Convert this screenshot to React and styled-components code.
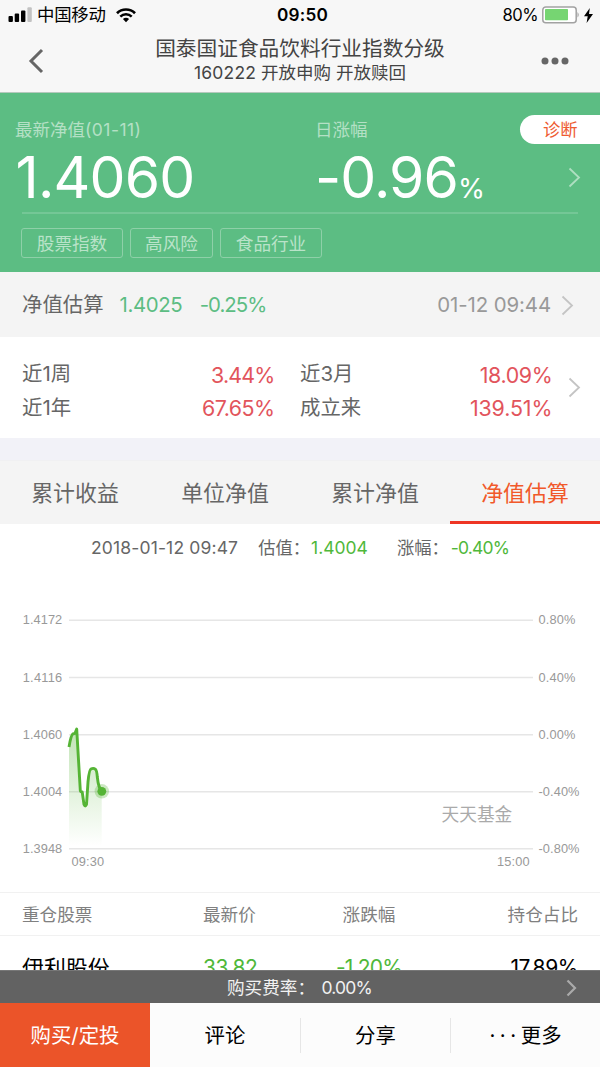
import React from "react";
import styled, { createGlobalStyle } from "styled-components";

const GlobalStyle = createGlobalStyle`
  * { box-sizing: border-box; }
  body { margin: 0; background: #fff; }
`;

const Screen = styled.div`
  width: 600px;
  height: 1067px;
  display: flex;
  flex-direction: column;
  overflow: hidden;
  background: #fff;
  color: #666;
  font-family: Inter, "Noto Sans CJK SC", sans-serif;
  font-weight: 400;
  white-space: nowrap;
`;

const Text = styled.span`
  display: block;
  font-size: ${(p) => p.$size}px;
  line-height: ${(p) => p.$line || 24}px;
  letter-spacing: ${(p) => p.$track || 0}px;
  color: ${(p) => p.$color || "inherit"};
  font-weight: ${(p) => p.$weight || 400};
`;

const Tracked = styled.span`
  letter-spacing: ${(p) => p.$track}px;
`;

const StatusBar = styled.div`
  height: 30px;
  flex: none;
  display: grid;
  grid-template-columns: 269px auto 1fr;
  align-items: center;
  padding: 0 7px 0 8px;
  background: #f7f7f7;
  color: #000;
`;

const StatusSide = styled.div`
  display: flex;
  align-items: center;
  gap: ${(p) => p.$gap}px;
  justify-content: ${(p) => (p.$end ? "flex-end" : "flex-start")};
`;

const NavBar = styled.header`
  height: 63px;
  flex: none;
  display: grid;
  grid-template-columns: 28px 1fr 28px;
  align-items: center;
  padding: 0 31px;
  background: #f7f7f7;
  border-bottom: 1px solid #b5c9bd;
`;

const BackIcon = styled.svg`
  display: block;
  margin-left: -3px;
`;

const NavTitle = styled.div`
  display: flex;
  flex-direction: column;
  align-items: center;
  color: #444;
`;

const Summary = styled.section`
  height: 179px;
  flex: none;
  background: #5cbd83;
  padding: 22px 0 0 15px;
  display: flex;
  flex-direction: column;
`;

const SummaryTop = styled.div`
  display: flex;
  height: 97px;
`;

const Metric = styled.div`
  width: ${(p) => p.$width}px;
  padding-top: 3px;
  color: #b4e0c5;
`;

const BigValue = styled.div`
  display: flex;
  align-items: baseline;
  height: 68px;
  padding: 2px 0 0 ${(p) => p.$indent || 0}px;
  color: #fff;
`;

const SummaryAside = styled.div`
  flex: 1;
  display: flex;
  flex-direction: column;
  align-items: flex-end;
`;

const Pill = styled.button`
  width: 80px;
  height: 29px;
  border: 0;
  padding: 0 0 0 23px;
  background: #fff;
  border-radius: 15px 0 0 15px;
  font-family: inherit;
  text-align: left;
`;

const AsideArrow = styled.div`
  padding: 23px 19px 0 0;
`;

const Divider = styled.div`
  height: 2px;
  flex: none;
  margin: 0 22px 0 7px;
  background: #74c796;
`;

const Tags = styled.div`
  display: flex;
  gap: 7px;
  padding: 14px 0 0 6px;
`;

const Tag = styled.div`
  height: 30px;
  width: ${(p) => p.$width}px;
  display: flex;
  align-items: center;
  justify-content: center;
  padding-top: 1px;
  border: 1px solid #8ed0a8;
  border-radius: 3px;
  color: #b9e3c9;
`;

const Estimate = styled.section`
  height: 65px;
  flex: none;
  display: flex;
  align-items: center;
  padding: 1px 26px 0 22px;
  background: #f4f4f4;
  color: #666;
`;

const Spacer = styled.div`
  flex: 1;
`;

const Gap = styled.div`
  width: ${(p) => p.$width}px;
`;

const Returns = styled.section`
  height: 101px;
  flex: none;
  display: flex;
  align-items: center;
  padding: 0 19px 0 22px;
`;

const ReturnGrid = styled.div`
  display: grid;
  grid-template-columns: 252px 252px;
  column-gap: 26px;
  width: 530px;
  padding-top: 16px;
`;

const ReturnCell = styled.div`
  height: 33.5px;
  display: flex;
  justify-content: space-between;
`;

const Figure = styled.div`
  padding-top: 0.5px;
  margin-right: -0.4px;
`;

const Band = styled.div`
  height: 23px;
  flex: none;
  background: #f2f2f8;
  border-bottom: 1px solid #f0f0f2;
`;

const Tabs = styled.nav`
  height: 63px;
  flex: none;
  display: grid;
  grid-template-columns: repeat(4, 1fr);
  background: #f4f4f4;
`;

const Tab = styled.div`
  display: flex;
  align-items: center;
  justify-content: center;
  padding-top: ${(p) => (p.$active ? 3 : 0)}px;
  color: ${(p) => (p.$active ? "#f1592a" : "#666")};
  border-bottom: ${(p) => (p.$active ? "3px solid #ee3524" : "0")};
`;

const Reading = styled.div`
  height: 48px;
  flex: none;
  display: flex;
  align-items: center;
  padding-left: 91px;
`;

const Chart = styled.svg`
  display: block;
  flex: none;
  width: 600px;
  height: 320px;
`;

const HoldingRow = styled.div`
  height: ${(p) => p.$height}px;
  flex: none;
  display: grid;
  grid-template-columns: 181px 107px 118px 1fr;
  align-items: center;
  padding: 2px 22px 0 22px;
  border-top: 1px solid #f1f1f1;
  color: #808080;

  > :nth-child(3) { text-align: center; }
  > :last-child { text-align: right; }
`;

const HoldingList = styled.section`
  flex: 1;
  min-height: 0;
  overflow: hidden;
`;

const FeeBar = styled.div`
  height: 33px;
  flex: none;
  display: flex;
  align-items: center;
  padding: 1px 23px 0 227px;
  background: #626262;
  color: #f1f1f1;
  border-top: 1px solid #777;
`;

const Actions = styled.footer`
  height: 64px;
  flex: none;
  display: grid;
  grid-template-columns: repeat(4, 1fr);
  align-items: center;
  background: #fcfcfc;
  color: #000;
`;

const Action = styled.div`
  height: ${(p) => (p.$primary ? 64 : 35)}px;
  display: flex;
  align-items: center;
  justify-content: center;
  padding-top: 2px;
  background: ${(p) => (p.$primary ? "#eb5429" : "transparent")};
  color: ${(p) => (p.$primary ? "#fff" : "#000")};
  border-left: ${(p) => (p.$line ? "1px solid #e6e6e6" : "0")};
`;

const Chevron = ({ color, w = 11, h = 19, stroke = 1.8 }) => (
  <svg width={w + 2} height={h + 2} viewBox={`-1 -1 ${w + 2} ${h + 2}`} fill="none" stroke={color} strokeWidth={stroke}>
    <path d={`M0.5 0.5 L${w - 1} ${h / 2} L0.5 ${h - 0.5}`} />
  </svg>
);

const Signal = () => (
  <svg width="24" height="16" viewBox="0 0 24 16">
    <rect x="0.5" y="9" width="4.4" height="6" rx="1" />
    <rect x="6.7" y="6.6" width="4.4" height="8.4" rx="1" />
    <rect x="13" y="3.4" width="4.4" height="11.6" rx="1" />
    <rect x="19.4" y="0.3" width="4.4" height="14.7" rx="1" fill="#c2c2c2" />
  </svg>
);

const Wifi = () => (
  <svg width="20" height="15" viewBox="0 0 20 15" fill="none" stroke="#000">
    <path d="M1 5.2 A12.8 12.8 0 0 1 19 5.2" strokeWidth="2.7" />
    <path d="M4.3 8.6 A8.2 8.2 0 0 1 15.7 8.6" strokeWidth="2.5" />
    <path d="M10 14.2 L6.9 11.1 A4.5 4.5 0 0 1 13.1 11.1 Z" fill="#000" stroke="none" />
  </svg>
);

const Battery = () => (
  <svg width="38" height="18" viewBox="0 0 38 18">
    <rect x="0.8" y="0.9" width="33.4" height="15.8" rx="3" fill="#fff" stroke="#a2a2a2" strokeWidth="1.5" />
    <rect x="3" y="3.1" width="23" height="11.2" rx="0.8" fill="#76d572" />
    <path d="M35.5 6 Q38 8.8 35.5 11.6 Z" fill="#a2a2a2" />
  </svg>
);

const Bolt = () => (
  <svg width="9" height="15" viewBox="0 0 9 15">
    <path d="M5.8 0 L0 8.2 H3.7 L2.6 15 L9 6 H5 Z" />
  </svg>
);

const levels = [
  { y: 620.3, value: "1.4172", change: "0.80%", w: 37 },
  { y: 677.5, value: "1.4116", change: "0.40%", w: 37 },
  { y: 734.7, value: "1.4060", change: "0.00%", w: 37 },
  { y: 791.7, value: "1.4004", change: "-0.40%", w: 41 },
  { y: 848.7, value: "1.3948", change: "-0.80%", w: 41 },
];

const curve =
  "M69 747 C70 741 71 735 73 733.8 L75 733.3 L76.7 729 L80.3 790.5 Q80.6 792 82.2 792 L84 804.5 Q85.2 807.5 86.5 804.5 L88 782 Q89.2 769.5 91 769 Q93.4 767.6 95.5 769.3 Q96.8 770.5 97.3 777 Q98.5 788 101.7 791.3";

const EstimateChart = () => (
  <Chart viewBox="0 572 600 320" fontFamily='"Liberation Sans", sans-serif' fontSize="12.8" fill="#999">
    <defs>
      <linearGradient id="fade" x1="0" y1="730" x2="0" y2="846" gradientUnits="userSpaceOnUse">
        <stop offset="0" stopColor="#55b435" stopOpacity="0.36" />
        <stop offset="1" stopColor="#55b435" stopOpacity="0" />
      </linearGradient>
    </defs>
    {levels.map((l) => (
      <g key={l.value}>
        <line x1="69" x2="533" y1={l.y} y2={l.y} stroke="#e6e6e6" strokeWidth="1.6" />
        <text x="62.2" y={l.y + 4} textAnchor="end" textLength="39.5">{l.value}</text>
        <text x="538.5" y={l.y + 4} textLength={l.w}>{l.change}</text>
      </g>
    ))}
    <path d={`${curve} V848 H69 Z`} fill="url(#fade)" />
    <path d={curve} fill="none" stroke="#55b435" strokeWidth="2.9" strokeLinejoin="round" />
    <circle cx="101.8" cy="791.3" r="7.2" fill="#55b435" fillOpacity="0.3" />
    <circle cx="101.8" cy="791.3" r="4.4" fill="#55b435" />
    <text x="71.5" y="866.2" textLength="32.5">09:30</text>
    <text x="497" y="866.2" textLength="32.5">15:00</text>
    <text x="441.5" y="820.8" fontFamily='"Noto Sans CJK SC", sans-serif' fontSize="17.7" fill="#aaa">天天基金</text>
  </Chart>
);

const returns = [
  { name: "近1周", value: "3.44%", track: -0.85 },
  { name: "近3月", value: "18.09%", track: -0.35 },
  { name: "近1年", value: "67.65%", track: -0.55 },
  { name: "成立来", value: "139.51%", track: -0.1 },
];

const green = "#4fb83a";

export default function App() {
  return (
    <Screen>
      <GlobalStyle />
      <StatusBar>
        <StatusSide $gap={5}>
          <Signal />
          <Text $size={17.4} $track={-0.25}>中国移动</Text>
          <Gap $width={0} />
          <Wifi />
        </StatusSide>
        <Text $size={17.2} $weight={600} $track={0.2}>09:50</Text>
        <StatusSide $end $gap={4}>
          <Text $size={16.6} $track={-0.5}>80%</Text>
          <Battery />
          <Bolt />
        </StatusSide>
      </StatusBar>

      <NavBar>
        <BackIcon width="16" height="26" viewBox="0 0 16 26" fill="none" stroke="#666" strokeWidth="3">
          <path d="M14 2 L3 13 L14 24" />
        </BackIcon>
        <NavTitle>
          <Text $size={20.7}>国泰国证食品饮料行业指数分级</Text>
          <Text $size={17.5}><Tracked $track={0.2}>160222</Tracked> 开放申购 开放赎回</Text>
        </NavTitle>
        <svg width="28" height="8" viewBox="0 0 28 8" fill="#666">
          <circle cx="4" cy="4" r="3.5" />
          <circle cx="14" cy="4" r="3.5" />
          <circle cx="24" cy="4" r="3.5" />
        </svg>
      </NavBar>

      <Summary>
        <SummaryTop>
          <Metric $width={300}>
            <Text $size={17.5}>最新净值<Tracked $track={0.45}>(01-11)</Tracked></Text>
            <BigValue $indent={0.5}>
              <Text $size={57} $line={68} $track={-0.8}>1.4060</Text>
            </BigValue>
          </Metric>
          <Metric $width={200}>
            <Text $size={17.5}>日涨幅</Text>
            <BigValue>
              <Text $size={57} $line={68} $track={-0.9}>-0.96</Text>
              <Text $size={27.5} $line={68}>%</Text>
            </BigValue>
          </Metric>
          <SummaryAside>
            <Pill><Text $size={17.3} $color="#ee5b31">诊断</Text></Pill>
            <AsideArrow><Chevron color="#aedfc1" /></AsideArrow>
          </SummaryAside>
        </SummaryTop>
        <Divider />
        <Tags>
          <Tag $width={102}><Text $size={17.6}>股票指数</Text></Tag>
          <Tag $width={83}><Text $size={17.6}>高风险</Text></Tag>
          <Tag $width={102}><Text $size={17.6}>食品行业</Text></Tag>
        </Tags>
      </Summary>

      <Estimate>
        <Text $size={20.4}>净值估算</Text>
        <Gap $width={16} />
        <Text $size={20.4} $track={-0.4} $color="#5cbd83">1.4025</Text>
        <Gap $width={17.5} />
        <Text $size={20.4} $track={-1} $color="#5cbd83">-0.25%</Text>
        <Spacer />
        <Text $size={20.4} $track={-0.1} $color="#999">01-12 09:44</Text>
        <Gap $width={10} />
        <Chevron color="#c4c4c4" />
      </Estimate>

      <Returns>
        <ReturnGrid>
          {returns.map((r) => (
            <ReturnCell key={r.name}>
              <Text $size={20.4}>{r.name}</Text>
              <Figure><Text $size={21.4} $track={r.track} $color="#e2545c">{r.value}</Text></Figure>
            </ReturnCell>
          ))}
        </ReturnGrid>
        <Spacer />
        <Chevron color="#c4c4c4" />
      </Returns>

      <Band />

      <Tabs>
        <Tab><Text $size={21.9}>累计收益</Text></Tab>
        <Tab><Text $size={21.9}>单位净值</Text></Tab>
        <Tab><Text $size={21.9}>累计净值</Text></Tab>
        <Tab $active><Text $size={21.9}>净值估算</Text></Tab>
      </Tabs>

      <Reading>
        <Text $size={17.5} $track={0.15}>2018-01-12 09:47</Text>
        <Gap $width={20} />
        <Text $size={17.3}>估值：</Text>
        <Gap $width={1} />
        <Text $size={17.5} $color={green}>1.4004</Text>
        <Gap $width={29} />
        <Text $size={17.3}>涨幅：</Text>
        <Gap $width={2} />
        <Text $size={17.5} $track={-0.8} $color={green}>-0.40%</Text>
      </Reading>

      <EstimateChart />

      <HoldingList>
        <HoldingRow $height={43}>
          <Text $size={17.6}>重仓股票</Text>
          <Text $size={17.6}>最新价</Text>
          <Text $size={17.6}>涨跌幅</Text>
          <Text $size={17.6}>持仓占比</Text>
        </HoldingRow>
        <HoldingRow $height={62}>
          <Text $size={21.9} $color="#000">伊利股份</Text>
          <Text $size={21} $track={-0.5} $color={green}>33.82</Text>
          <Text $size={21} $track={-0.8} $color={green}>-1.20%</Text>
          <Text $size={21} $track={-0.4} $color="#000">17.89%</Text>
        </HoldingRow>
      </HoldingList>

      <FeeBar>
        <Text $size={17.6}>购买费率：</Text>
        <Gap $width={6.5} />
        <Text $size={17.5} $track={-0.8}>0.00%</Text>
        <Spacer />
        <Chevron color="#aaa" w={9} h={16} stroke={2.2} />
      </FeeBar>

      <Actions>
        <Action $primary><Text $size={20.4}>购买/定投</Text></Action>
        <Action><Text $size={20.4}>评论</Text></Action>
        <Action $line><Text $size={20.4}>分享</Text></Action>
        <Action $line>
          <Text $size={20.4} $track={4.6}>···</Text>
          <Text $size={20.4}>更多</Text>
        </Action>
      </Actions>
    </Screen>
  );
}
